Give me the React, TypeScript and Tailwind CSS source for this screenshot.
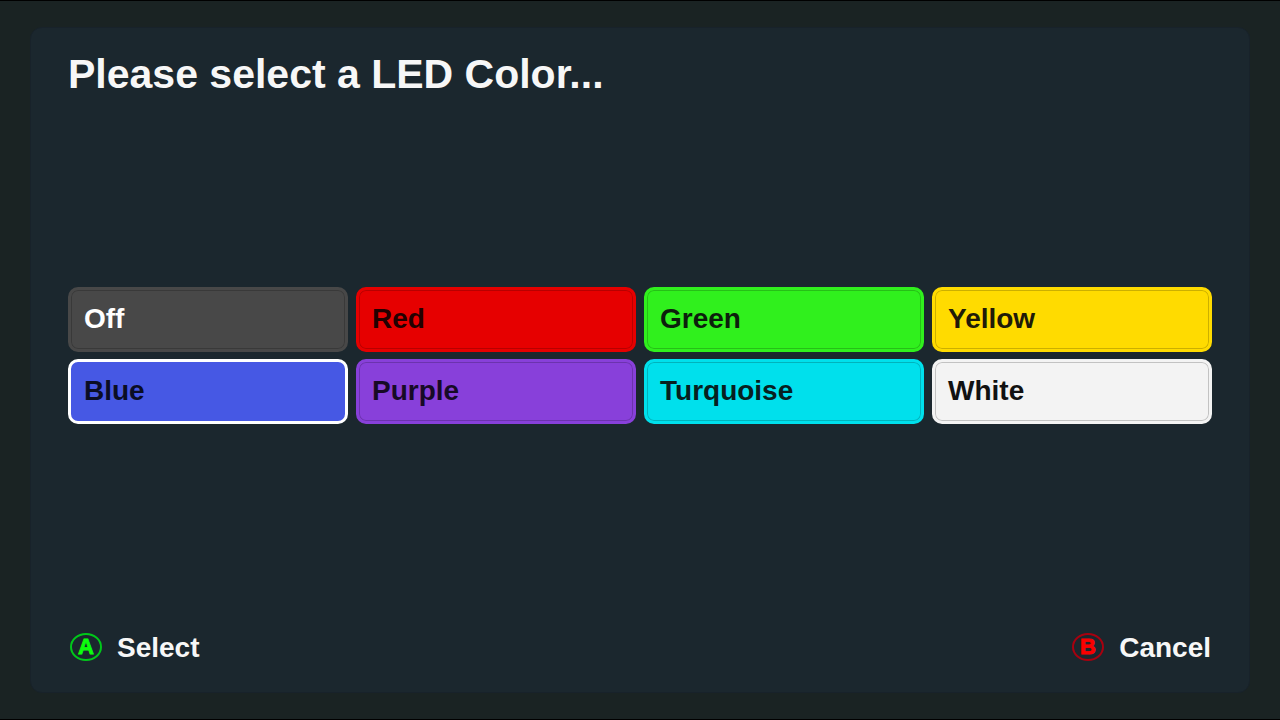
import { useState } from "react";

type LedColor = { name: string; style: string };

const LED_COLORS: LedColor[] = [
  { name: "Off", style: "bg-[#484848] border-[#484848] text-white" },
  { name: "Red", style: "bg-[#e60000] border-[#e60000] text-[#220000]" },
  { name: "Green", style: "bg-[#30f01d] border-[#30f01d] text-[#0c1f0c]" },
  { name: "Yellow", style: "bg-[#ffdb00] border-[#ffdb00] text-[#201a08]" },
  { name: "Blue", style: "bg-[#4658e4] border-[#4658e4] text-[#0a0d24]" },
  { name: "Purple", style: "bg-[#8840da] border-[#8840da] text-[#170a26]" },
  { name: "Turquoise", style: "bg-[#00e0ec] border-[#00e0ec] text-[#07201f]" },
  { name: "White", style: "bg-[#f3f3f3] border-[#f3f3f3] text-[#111111]" },
];

function PadGlyph({ letter, ring, fill }: { letter: string; ring: string; fill: string }) {
  return (
    <svg width="34" height="30" viewBox="0 0 34 30" aria-hidden="true">
      <ellipse cx="17" cy="14" rx="15" ry="13" fill="none" strokeWidth="2" className={ring} />
      <text
        x="17"
        y="21"
        textAnchor="middle"
        fontSize="22"
        fontWeight="700"
        strokeWidth="0.8"
        className={fill}
      >
        {letter}
      </text>
    </svg>
  );
}

export default function App() {
  const [selected, setSelected] = useState("Blue");

  return (
    <div className="flex min-h-screen flex-col border-y border-black bg-[#1a2323] px-[30px] py-[26px] font-['Liberation_Sans',Arial,sans-serif] font-bold text-[#f7f7f7]">
      <div className="flex flex-1 flex-col rounded-xl border border-[#18222a] bg-[#1b272e] px-[37px] pt-6 pb-7">
        <h1 className="text-[41px] leading-[44px]">Please select a LED Color...</h1>

        <main className="flex flex-1 flex-col justify-center pb-[18px]">
          <div className="grid grid-cols-4 gap-x-2 gap-y-[7px]">
            {LED_COLORS.map(({ name, style }) => (
              <button
                key={name}
                type="button"
                aria-pressed={name === selected}
                onClick={() => setSelected(name)}
                className={`flex h-[65px] items-center rounded-[10px] border-[3px] px-[13px] text-left text-[28px] leading-8 ${style} ${
                  name === selected ? "border-white!" : "shadow-[inset_0_0_0_1px_rgba(0,0,0,0.2)]"
                }`}
              >
                {name}
              </button>
            ))}
          </div>
        </main>

        <footer className="flex items-center justify-between px-px text-[28px] leading-8">
          <button type="button" className="flex items-center gap-3.5">
            <PadGlyph letter="A" ring="stroke-[#00c81a]" fill="fill-[#0cff0c] stroke-[#0cff0c]" />
            Select
          </button>
          <button type="button" className="flex items-center gap-3.5">
            <PadGlyph letter="B" ring="stroke-[#a8000f]" fill="fill-[#fa0000] stroke-[#fa0000]" />
            Cancel
          </button>
        </footer>
      </div>
    </div>
  );
}
